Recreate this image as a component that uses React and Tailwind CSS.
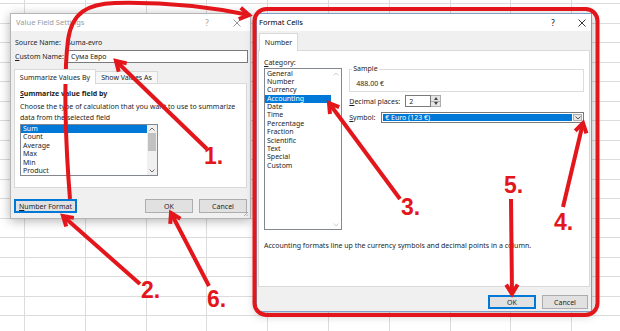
import React from "react";

const RED = "#e3161c";
const CATS = ["General","Number","Currency","Accounting","Date","Time","Percentage","Fraction","Scientific","Text","Special","Custom"];
const FUNCS = ["Sum","Count","Average","Max","Min","Product"];

function head(x1, y1, x2, y2, len = 11, ang = 0.55) {
  const a = Math.atan2(y2 - y1, x2 - x1);
  const p1 = [x2 - len * Math.cos(a - ang), y2 - len * Math.sin(a - ang)];
  const p2 = [x2 - len * Math.cos(a + ang), y2 - len * Math.sin(a + ang)];
  return `M${p1[0]},${p1[1]} L${x2},${y2} L${p2[0]},${p2[1]}`;
}

function Arrow({ x1, y1, x2, y2 }) {
  return (
    <g>
      <line x1={x1} y1={y1} x2={x2} y2={y2} stroke={RED} strokeWidth="4" />
      <path d={head(x1, y1, x2, y2)} fill="none" stroke={RED} strokeWidth="4" strokeLinejoin="miter" />
    </g>
  );
}

function Close({ color = "#333" }) {
  return (
    <svg width="8" height="8" viewBox="0 0 8 8">
      <path d="M0.5 0.5 L7.5 7.5 M7.5 0.5 L0.5 7.5" stroke={color} strokeWidth="0.9" />
    </svg>
  );
}

function Chev({ up, color = "#606060" }) {
  return (
    <svg width="6" height="4" viewBox="0 0 6 4">
      <path d={up ? "M0.5 3.5 L3 1 L5.5 3.5" : "M0.5 0.5 L3 3 L5.5 0.5"} fill="none" stroke={color} strokeWidth="0.9" />
    </svg>
  );
}

function Btn({ children, w, focus }) {
  return (
    <div
      className={
        focus
          ? "h-[14px] flex items-center justify-center bg-[#e1e1e1] border border-[#0078d7] shadow-[inset_0_0_0_1px_#0078d7]"
          : "h-[14px] flex items-center justify-center bg-[#e1e1e1] border border-[#adadad]"
      }
      style={{ width: w }}
    >
      {children}
    </div>
  );
}

export default function App() {
  return (
    <div className="relative w-[620px] h-[331px] overflow-hidden bg-white font-['Noto_Sans',sans-serif]">
      {/* spreadsheet grid */}
      <div className="absolute inset-0 flex">
        <div className="w-[25px] shrink-0 border-r border-[#dcdcdc]" />
        {Array.from({ length: 10 }).map((_, i) => (
          <div key={i} className="w-[60.8px] shrink-0 border-r border-[#dcdcdc]" />
        ))}
      </div>
      <div className="absolute inset-0 flex flex-col">
        <div className="h-[4px] shrink-0 border-b border-[#dcdcdc]" />
        {Array.from({ length: 17 }).map((_, i) => (
          <div key={i} className="h-[19.5px] shrink-0 border-b border-[#dcdcdc]" />
        ))}
      </div>

      {/* Value Field Settings dialog */}
      <div className="absolute left-[10px] top-[13px] w-[241px] h-[206px] border border-[#b5b5b5] bg-[#f0f0f0] shadow-[0_2px_10px_rgba(0,0,0,0.3)] text-[7px] leading-none text-[#1e1e1e]">
        <div className="h-[17px] bg-white flex items-center pl-[5px] text-[7.5px] text-[#9a9a9a]">
          <span>Value Field Settings</span>
          <span className="ml-auto w-[6px] text-center text-[8px]">?</span>
          <span className="ml-[23px] mr-[9px] flex"><Close color="#8a8a8a" /></span>
        </div>
        <div className="pl-[4px] pr-[2px]">
          <div className="mt-[6px] h-[10px] flex items-center">
            <span className="w-[52px]">Source Name:</span>
            <span>Suma-evro</span>
          </div>
          <div className="mt-[3px] h-[13px] flex items-center">
            <span className="w-[52px]"><span className="underline">C</span>ustom Name:</span>
            <div className="flex-1 h-full border border-[#7a7a7a] bg-white flex items-center pl-[3px]">Сума Евро</div>
          </div>
        </div>
        <div className="mt-[6px] ml-[3px] h-[14px] flex items-end">
          <div className="relative z-10 -mb-px h-[15px] w-[82px] bg-white border border-b-0 border-[#d9d9d9] flex items-center justify-center">
            Summarize Values By
          </div>
          <div className="h-[12px] w-[62px] bg-[#f7f7f7] border border-b-0 border-l-0 border-[#d9d9d9] flex items-center justify-center">
            Show Values As
          </div>
        </div>
        <div className="ml-[3px] w-[233px] h-[105px] bg-white border border-[#d9d9d9] px-[5px]">
          <div className="mt-[4px] h-[10px] flex items-center font-bold">
            <span className="underline">S</span>ummarize value field by
          </div>
          <div className="mt-[3px] leading-[11px]">
            <div>Choose the type of calculation that you want to use to summarize</div>
            <div>data from the selected field</div>
          </div>
          <div className="mt-[1px] w-[138px] h-[52px] border border-[#828790] bg-white flex">
            <div className="flex-1">
              {FUNCS.map((f) => (
                <div
                  key={f}
                  className={f === "Sum" ? "h-[8.4px] leading-[8.4px] pl-[2px] bg-[#0078d7] text-white" : "h-[8.4px] leading-[8.4px] pl-[2px]"}
                >
                  {f}
                </div>
              ))}
            </div>
            <div className="w-[10px] flex flex-col items-center bg-[#f0f0f0]">
              <div className="h-[8px] flex items-center"><Chev up /></div>
              <div className="w-[8px] h-[18px] bg-[#c1c1c1]" />
              <div className="mt-auto h-[8px] flex items-center"><Chev /></div>
            </div>
          </div>
        </div>
        <div className="mt-[11px] px-[3px] flex">
          <Btn w="63px" focus><span><span className="underline">N</span>umber Format</span></Btn>
          <div className="ml-auto" />
          <Btn w="48px">OK</Btn>
          <div className="w-[6px]" />
          <Btn w="48px">Cancel</Btn>
        </div>
        <svg className="absolute right-[1px] bottom-[1px]" width="7" height="7" viewBox="0 0 7 7">
          <path d="M6 2 L2 6 M6 4.5 L4.5 6" stroke="#9a9a9a" strokeWidth="0.8" />
        </svg>
      </div>

      {/* Format Cells dialog */}
      <div className="absolute left-[256px] top-[13px] w-[336px] h-[299px] border border-[#7f9fc9] bg-[#f0f0f0] shadow-[0_2px_10px_rgba(0,0,0,0.3)] text-[7px] leading-none text-[#1e1e1e]">
        <div className="h-[17px] bg-white flex items-center pl-[2px] text-[7.5px] text-black">
          <span>Format Cells</span>
          <span className="ml-auto w-[6px] text-center text-[8px]">?</span>
          <span className="ml-[22px] mr-[5px] flex"><Close color="#222" /></span>
        </div>
        <div className="mt-[2px] ml-[2px] h-[17px] flex items-end">
          <div className="relative z-10 -mb-px h-[18px] w-[39px] bg-white border border-b-0 border-[#d9d9d9] flex items-center justify-center">
            Number
          </div>
        </div>
        <div className="ml-[1px] w-[332px] h-[237px] bg-white border border-[#d9d9d9] px-[5px] pt-[6px]">
          <div className="flex">
            <div className="w-[79px]">
              <div className="h-[10px] flex items-center"><span className="underline">C</span>ategory:</div>
              <div className="mt-[1px] h-[162px] border border-[#828790] bg-white flex">
                <div className="flex-1 pt-[0.5px]">
                  {CATS.map((c) => (
                    <div
                      key={c}
                      className={c === "Accounting" ? "h-[8.4px] leading-[8.4px] pl-[2px] bg-[#0078d7] text-white" : "h-[8.4px] leading-[8.4px] pl-[2px]"}
                    >
                      {c}
                    </div>
                  ))}
                </div>
                <div className="w-[10px] flex flex-col items-center">
                  <div className="h-[9px] flex items-center"><Chev up color="#c8c8c8" /></div>
                  <div className="mt-auto h-[9px] flex items-center"><Chev color="#c8c8c8" /></div>
                </div>
              </div>
            </div>
            <div className="ml-[7px] w-[237px]">
              <div className="relative mt-[12px] h-[23px] border border-[#dcdcdc]">
                <span className="absolute -top-[5px] left-[2px] bg-white px-[1px]">Sample</span>
                <div className="pl-[6px] pt-[10px]">488.00 €</div>
              </div>
              <div className="mt-[3px] h-[12px] flex items-center">
                <span className="w-[56px]"><span className="underline">D</span>ecimal places:</span>
                <div className="w-[26px] h-full border border-[#7a7a7a] bg-white flex items-center pl-[3px]">2</div>
                <div className="w-[10px] h-full flex flex-col border border-l-0 border-[#adadad] bg-[#e5e5e5]">
                  <div className="flex-1 flex items-center justify-center border-b border-[#adadad]">
                    <svg width="4" height="3" viewBox="0 0 4 3"><path d="M0 3 L2 0 L4 3Z" fill="#444" /></svg>
                  </div>
                  <div className="flex-1 flex items-center justify-center">
                    <svg width="4" height="3" viewBox="0 0 4 3"><path d="M0 0 L2 3 L4 0Z" fill="#444" /></svg>
                  </div>
                </div>
              </div>
              <div className="mt-[5px] h-[11px] flex items-center">
                <span className="w-[32px]"><span className="underline">S</span>ymbol:</span>
                <div className="flex-1 h-full border border-[#7a7a7a] bg-white flex p-[1px]">
                  <div className="flex-1 bg-[#0078d7] text-white flex items-center pl-[2px]">€ Euro (123 €)</div>
                  <div className="ml-[1px] w-[9px] bg-[#e5e5e5] border border-[#adadad] flex items-center justify-center"><Chev color="#444" /></div>
                </div>
              </div>
            </div>
          </div>
          <div className="mt-[10px] h-[10px] flex items-center">
            Accounting formats line up the currency symbols and decimal points in a column.
          </div>
        </div>
        <div className="mt-[8px] pr-[3px] flex justify-end">
          <Btn w="48px" focus>OK</Btn>
          <div className="w-[6px]" />
          <Btn w="46px">Cancel</Btn>
        </div>
      </div>

      {/* annotations */}
      <svg className="absolute inset-0 pointer-events-none" width="620" height="331" viewBox="0 0 620 331">
        <rect x="254.5" y="9" width="343" height="306" rx="12" fill="none" stroke={RED} strokeWidth="4" />
        <path d="M70 199 C 66 150, 63 80, 68 40 C 72 12, 88 4, 115 3 C 160 2, 205 6, 249 15" fill="none" stroke={RED} strokeWidth="4" />
        <path d={head(215, 9, 249, 15)} fill="none" stroke={RED} strokeWidth="4" />
        <Arrow x1={207} y1={149} x2={116} y2={61} />
        <Arrow x1={140} y1={284} x2={63} y2={216} />
        <Arrow x1={400} y1={199} x2={329} y2={103} />
        <Arrow x1={563} y1={207} x2={583} y2={123} />
        <Arrow x1={511} y1={199} x2={512} y2={294} />
        <Arrow x1={209} y1={286} x2={171} y2={213} />
        <g fill={RED} fontFamily="'Liberation Sans', Arial, sans-serif" fontWeight="bold" fontSize="23">
          <text x="204" y="164">1.</text>
          <text x="141" y="298">2.</text>
          <text x="401" y="215">3.</text>
          <text x="554" y="230">4.</text>
          <text x="504" y="193">5.</text>
          <text x="207" y="307">6.</text>
        </g>
      </svg>
    </div>
  );
}
